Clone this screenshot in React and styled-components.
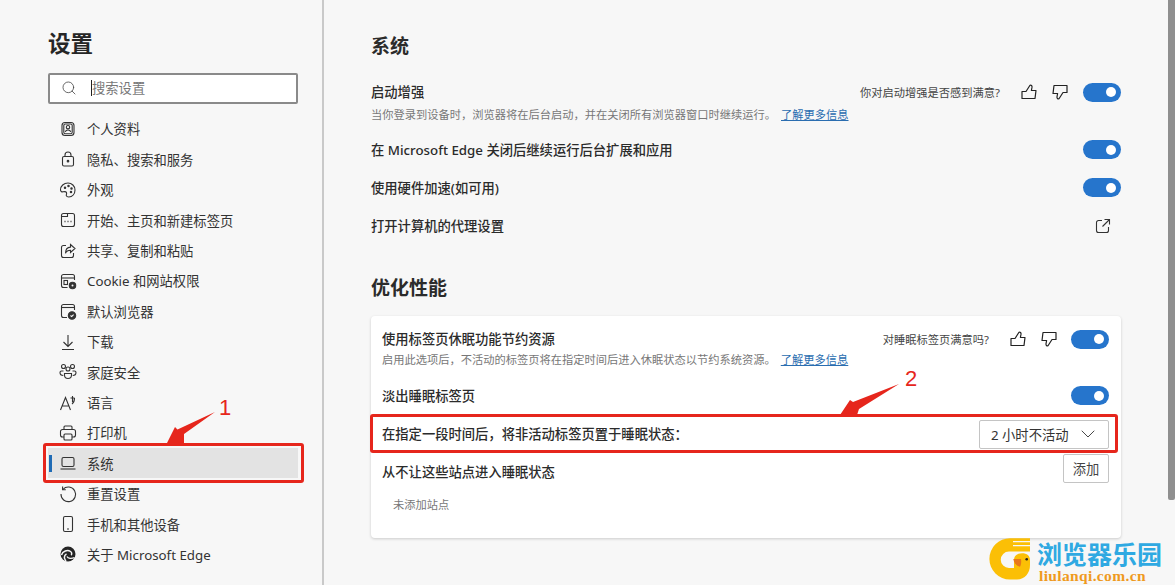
import React from "react";
import styled, { createGlobalStyle } from "styled-components";
import { Search, ChevronDown } from "lucide-react";

const GlobalStyle = createGlobalStyle`
  html, body { margin: 0; padding: 0; }
  body {
    background: #f7f7f7;
    font-family: "Noto Sans", "Noto Sans CJK SC", sans-serif;
    color: #2b2b2b;
  }
  * { box-sizing: border-box; }
`;

const Page = styled.div`
  position: relative;
  display: flex;
  width: 1175px;
  height: 585px;
  overflow: hidden;
  background: #f7f7f7;
`;

const Sidebar = styled.aside`
  flex: 0 0 324px;
  padding: 28px 24px 0 48px;
  border-right: 2px solid #c9c9c9;
`;

const SideTitle = styled.h1`
  margin: 0 0 13px;
  font-size: 22.5px;
  line-height: 32px;
  font-weight: 700;
  color: #262626;
`;

const SearchBox = styled.div`
  display: flex;
  align-items: center;
  width: 250px;
  height: 31px;
  padding: 0 0 2px 11px;
  background: #fff;
  border: 2px solid #8a8a8a;
  border-radius: 2px;
  color: #444;
`;

const Caret = styled.span`
  width: 1px;
  height: 16px;
  margin-left: 14px;
  background: #222;
`;

const Placeholder = styled.span`
  font-size: 13.3px;
  color: #777;
`;

const NavList = styled.nav`
  margin-top: 9.8px;
`;

const NavRow = styled.div`
  position: relative;
  display: flex;
  align-items: center;
  height: 30.4px;
  padding-left: 10px;
  font-size: 13.3px;
  color: #333;
  background: ${(p) => (p.$active ? "#e3e3e3" : "transparent")};
  &::before {
    content: "";
    display: ${(p) => (p.$active ? "block" : "none")};
    position: absolute;
    left: 1px;
    top: 7px;
    width: 3px;
    height: 17px;
    background: #1f6bb5;
  }
`;

const NavIcon = styled.svg`
  flex: 0 0 20px;
  width: 20px;
  height: 20px;
  margin-right: 9px;
  fill: none;
  stroke: #333;
  stroke-width: 1.1;
`;

const Main = styled.main`
  flex: 1;
  padding: 34px 47px 0 47px;
`;

const SectionTitle = styled.h2`
  margin: ${(p) => (p.$spaced ? "31.5px" : "0")} 0 0;
  font-size: 19px;
  line-height: 24px;
  font-weight: 700;
  color: #2b2b2b;
`;

const RowGroup = styled.div`
  margin-top: 24px;
`;

const Row = styled.div`
  display: flex;
  align-items: center;
  justify-content: space-between;
  height: ${(p) => p.$h || 38}px;
`;

const RowBlock = styled.div`
  height: ${(p) => p.$h}px;
`;

const RowTitle = styled.div`
  font-size: 13.3px;
  line-height: 20px;
  font-weight: 500;
  color: #2b2b2b;
`;

const TopRow = styled.div`
  display: flex;
  align-items: center;
  justify-content: space-between;
  height: 20px;
`;

const Sub = styled.div`
  margin-top: ${(p) => p.$top}px;
  font-size: 11.25px;
  line-height: 20px;
  color: #777;
`;

const Link = styled.a`
  margin-left: 5px;
  color: #2a6db0;
  text-decoration: underline;
`;

const Actions = styled.div`
  display: flex;
  align-items: center;
`;

const Feedback = styled.span`
  margin-right: 21px;
  font-size: 11.25px;
  color: #444;
`;

const ThumbIcon = styled.svg`
  width: 16px;
  height: 16px;
  margin-right: ${(p) => p.$gap}px;
  fill: none;
  stroke: #222;
  stroke-width: 1.2;
  stroke-linejoin: round;
  transform: ${(p) => (p.$down ? "rotate(180deg)" : "none")};
`;

const Toggle = styled.div`
  display: flex;
  align-items: center;
  justify-content: flex-end;
  width: 38px;
  height: 19px;
  padding-right: 5px;
  border-radius: 10px;
  background: #2675cc;
  &::after {
    content: "";
    width: 10px;
    height: 10px;
    border-radius: 50%;
    background: #fff;
  }
`;

const OpenIcon = styled.svg`
  width: 16px;
  height: 16px;
  margin-right: 10px;
  fill: none;
  stroke: #333;
  stroke-width: 1.1;
`;

const Card = styled.section`
  height: 222px;
  margin-top: 16px;
  padding: 13px 12px 0 11px;
  background: #fff;
  border-radius: 4px;
  box-shadow: 0 1px 3px rgba(0, 0, 0, 0.18);
`;

const Select = styled.div`
  display: flex;
  align-items: center;
  justify-content: space-between;
  width: 130px;
  height: 29px;
  padding: 0 8px 0 11px;
  background: #fff;
  border: 1px solid #c4c4c4;
  border-radius: 2px;
  font-size: 13.3px;
  color: #333;
`;

const NeverRow = styled.div`
  display: flex;
  justify-content: space-between;
  padding-top: 0.5px;
`;

const NeverTitle = styled(RowTitle)`
  padding-top: 7.5px;
`;

const AddButton = styled.button`
  width: 46px;
  height: 29px;
  padding: 0;
  background: #fff;
  border: 1px solid #c4c4c4;
  border-radius: 2px;
  font: inherit;
  font-size: 13.3px;
  color: #444;
`;

const EmptyNote = styled.div`
  margin: 12px 0 0 11px;
  font-size: 11.25px;
  line-height: 20px;
  color: #777;
`;

const Scrollbar = styled.div`
  flex: 0 0 7px;
  height: 500px;
  background: #8f8f8f;
  border-radius: 0 0 2px 2px;
`;

/* annotations drawn over the screenshot */
const Mark = styled.div`
  position: absolute;
  left: ${(p) => p.$x}px;
  top: ${(p) => p.$y}px;
  width: ${(p) => p.$w}px;
  height: ${(p) => p.$h}px;
  border: 3px solid #e6261c;
  border-radius: 3px;
`;

const Overlay = styled.svg`
  position: absolute;
  left: 0;
  top: 0;
  width: 1175px;
  height: 585px;
  pointer-events: none;
`;

const MarkNumber = styled.span`
  position: absolute;
  left: ${(p) => p.$x}px;
  top: ${(p) => p.$y}px;
  font-family: "Liberation Sans", sans-serif;
  font-size: 22px;
  line-height: 24px;
  color: #e6261c;
`;

const Watermark = styled.div`
  position: absolute;
  left: 989px;
  top: 538px;
  display: flex;
  gap: 4px;
`;

const DuckLogo = styled.svg`
  width: 44px;
  height: 47px;
`;

const WatermarkText = styled.div`
  display: flex;
  flex-direction: column;
`;

const WatermarkName = styled.span`
  font-family: "Noto Sans CJK SC", sans-serif;
  font-size: 25px;
  line-height: 30px;
  font-weight: 700;
  color: #2fa9e2;
  white-space: nowrap;
`;

const WatermarkUrl = styled.span`
  margin: 0 0 0 2px;
  font-family: "Liberation Serif", serif;
  font-size: 15.5px;
  line-height: 15px;
  font-weight: 700;
  letter-spacing: 0.35px;
  color: #ef9a1e;
`;

const icons = {
  profile: (
    <>
      <rect x="4" y="3.5" width="12" height="13" rx="3" />
      <rect x="5.8" y="5" width="8.4" height="9.8" rx="1.5" />
      <circle cx="10" cy="8.2" r="1.7" />
      <path d="M7.3 13c.3-1.5 1.3-2 2.7-2s2.4.5 2.7 2" />
    </>
  ),
  lock: (
    <>
      <rect x="4.5" y="7.5" width="11" height="9.5" rx="1.5" />
      <path d="M7 7.500V6a3 3 0 0 1 6 0v1.500" />
      <circle cx="10" cy="12.200" r="0.800" fill="#333" />
    </>
  ),
  palette: (
    <>
      <path d="M10 3c-4.200 0-7.500 3-7.500 6.800 0 1.500 1.200 2.200 2.500 2 1.500-.3 3-.3 3.500.8.500 1.200-.5 2-.2 3 .3 1 1.300 1.400 2.500 1.400 3.600 0 6.200-3 6.200-7S13.800 3 10 3z" />
      <circle cx="7" cy="7.800" r="0.700" fill="#333" />
      <circle cx="10.500" cy="6" r="0.700" fill="#333" />
      <circle cx="13.500" cy="8.500" r="0.700" fill="#333" />
      <circle cx="13" cy="12" r="0.700" fill="#333" />
    </>
  ),
  newtab: (
    <>
      <rect x="3.5" y="3.5" width="13" height="13" rx="2" />
      <path d="M3.500 6.500h6V3.500" />
      <path d="M6.500 11.500h1M9.500 11.500h1M12.500 11.500h1" strokeWidth="1.300" />
    </>
  ),
  share: (
    <>
      <path d="M8 4.500H5.500a2 2 0 0 0-2 2v8a2 2 0 0 0 2 2h8a2 2 0 0 0 2-2V12" />
      <path d="M12.500 3.500L17 7.500l-4.500 4V9.300c-2.500 0-4.200 1-5 3 0-3.800 2-6 5-6.200z" />
    </>
  ),
  cookie: (
    <>
      <path d="M9.500 16.500H5.500a2 2 0 0 1-2-2v-9a2 2 0 0 1 2-2h9a2 2 0 0 1 2 2V9" />
      <path d="M3.500 7h13" />
      <rect x="6" y="9.5" width="3.5" height="4" />
      <circle cx="14.5" cy="14.5" r="3.2" fill="#333" />
      <circle cx="14.5" cy="14.5" r="1" fill="#f7f7f7" stroke="none" />
    </>
  ),
  browser: (
    <>
      <path d="M9 16.500H5.500a2 2 0 0 1-2-2v-9a2 2 0 0 1 2-2h9a2 2 0 0 1 2 2V9" />
      <path d="M3.500 6.500h13" />
      <circle cx="14" cy="14.5" r="3.7" fill="#333" />
      <path d="M12.500 14.500l1.200 1.100 1.900-2" stroke="#fff" />
    </>
  ),
  download: <path d="M10 3v11.500M5.500 10l4.500 4.500 4.500-4.500M4 17.500h12" />,
  family: (
    <>
      <circle cx="5.5" cy="4.5" r="2" />
      <circle cx="14.5" cy="4.5" r="2" />
      <circle cx="10" cy="7" r="2" />
      <path d="M6.500 11.500h7v1.500a3.500 3.500 0 0 1-7 0z" />
      <path d="M5.500 9H3.500A1.500 1.500 0 0 0 2 10.500c0 1.700 1.300 3 3.300 3M14.500 9h2a1.500 1.500 0 0 1 1.500 1.500c0 1.700-1.300 3-3.300 3" />
    </>
  ),
  language: (
    <>
      <path d="M2.500 17L7.500 4.500 12.500 17M4.200 13h6.600" />
      <path d="M14.500 3v6M12.500 5h4M16.500 5c0 3-1 5-2.500 6" />
    </>
  ),
  printer: (
    <>
      <path d="M6 6V4a1 1 0 0 1 1-1h6a1 1 0 0 1 1 1v2" />
      <path d="M6 14H4.500a2 2 0 0 1-2-2V8.500a2 2 0 0 1 2-2h11a2 2 0 0 1 2 2V12a2 2 0 0 1-2 2H14" />
      <rect x="6" y="11" width="8" height="6" rx="1" />
    </>
  ),
  laptop: (
    <>
      <rect x="4" y="4.5" width="12" height="9" rx="1.5" />
      <path d="M2.500 16h15" />
    </>
  ),
  reset: (
    <>
      <path d="M5 5.300A7.300 7.300 0 1 1 3 10" />
      <path d="M4.600 2.500v3.200h3.200" />
    </>
  ),
  phone: (
    <>
      <rect x="5.5" y="2.5" width="9" height="15" rx="1.5" />
      <path d="M9 15h2" />
    </>
  ),
  edge: (
    <>
      <circle cx="10" cy="10" r="7.5" fill="#262626" stroke="none" />
      <path d="M3.500 11c1-4 6-5.500 9-3.500 1.500 1 1.500 3 .5 3.500" stroke="#f7f7f7" strokeWidth="1.500" />
      <path d="M8 17c-2-2-2.500-5.500.5-7" stroke="#f7f7f7" strokeWidth="1.500" />
      <path d="M9 12.500c1 2 4.500 2.500 7.500 1" stroke="#f7f7f7" strokeWidth="1.300" />
    </>
  ),
};

const navItems = [
  ["profile", "个人资料"],
  ["lock", "隐私、搜索和服务"],
  ["palette", "外观"],
  ["newtab", "开始、主页和新建标签页"],
  ["share", "共享、复制和粘贴"],
  ["cookie", "Cookie 和网站权限"],
  ["browser", "默认浏览器"],
  ["download", "下载"],
  ["family", "家庭安全"],
  ["language", "语言"],
  ["printer", "打印机"],
  ["laptop", "系统", true],
  ["reset", "重置设置"],
  ["phone", "手机和其他设备"],
  ["edge", "关于 Microsoft Edge"],
];

const thumbPath = "M1 7.500H5L9 1.200C10.200 .8 11.200 1.800 11 3.200L10.400 6.500H15L14 14.500H1Z";

const Rating = ({ text, gap }) => (
  <>
    <Feedback>{text}</Feedback>
    <ThumbIcon viewBox="0 0 16 16" $gap={15}>
      <path d={thumbPath} />
    </ThumbIcon>
    <ThumbIcon viewBox="0 0 16 16" $gap={gap} $down>
      <path d={thumbPath} />
    </ThumbIcon>
  </>
);

const App = () => {
  return (
    <Page>
      <GlobalStyle />
      <Sidebar>
        <SideTitle>设置</SideTitle>
        <SearchBox>
          <Search size={16} strokeWidth={1.2} />
          <Caret />
          <Placeholder>搜索设置</Placeholder>
        </SearchBox>
        <NavList>
          {navItems.map(([icon, label, active]) => (
            <NavRow key={label} $active={active}>
              <NavIcon viewBox="0 0 20 20">{icons[icon]}</NavIcon>
              {label}
            </NavRow>
          ))}
        </NavList>
      </Sidebar>

      <Main>
        <SectionTitle>系统</SectionTitle>
        <RowGroup>
          <RowBlock $h={48.5}>
            <TopRow>
              <RowTitle>启动增强</RowTitle>
              <Actions>
                <Rating text="你对启动增强是否感到满意?" gap={15} />
                <Toggle />
              </Actions>
            </TopRow>
            <Sub $top={3}>
              当你登录到设备时，浏览器将在后台启动，并在关闭所有浏览器窗口时继续运行。
              <Link>了解更多信息</Link>
            </Sub>
          </RowBlock>
          <Row>
            <RowTitle>在 Microsoft Edge 关闭后继续运行后台扩展和应用</RowTitle>
            <Toggle />
          </Row>
          <Row>
            <RowTitle>使用硬件加速(如可用)</RowTitle>
            <Toggle />
          </Row>
          <Row>
            <RowTitle>打开计算机的代理设置</RowTitle>
            <OpenIcon viewBox="0 0 16 16">
              <path d="M7 2.500H3.500a2 2 0 0 0-2 2v8a2 2 0 0 0 2 2h8a2 2 0 0 0 2-2V9" />
              <path d="M9.500 1.500h5v5M14.500 1.500L7.500 8.500" />
            </OpenIcon>
          </Row>
        </RowGroup>

        <SectionTitle $spaced>优化性能</SectionTitle>
        <Card>
          <RowBlock $h={47.5}>
            <TopRow>
              <RowTitle>使用标签页休眠功能节约资源</RowTitle>
              <Actions>
                <Rating text="对睡眠标签页满意吗?" gap={14} />
                <Toggle />
              </Actions>
            </TopRow>
            <Sub $top={1}>
              启用此选项后，不活动的标签页将在指定时间后进入休眠状态以节约系统资源。
              <Link>了解更多信息</Link>
            </Sub>
          </RowBlock>
          <Row>
            <RowTitle>淡出睡眠标签页</RowTitle>
            <Toggle />
          </Row>
          <Row $h={39}>
            <RowTitle>在指定一段时间后，将非活动标签页置于睡眠状态：</RowTitle>
            <Select>
              2 小时不活动
              <ChevronDown size={24} strokeWidth={0.9} />
            </Select>
          </Row>
          <NeverRow>
            <NeverTitle>从不让这些站点进入睡眠状态</NeverTitle>
            <AddButton>添加</AddButton>
          </NeverRow>
          <EmptyNote>未添加站点</EmptyNote>
        </Card>
      </Main>
      <Scrollbar />

      <Mark $x={43} $y={443} $w={261} $h={40} />
      <Mark $x={370} $y={414} $w={748} $h={39} />
      <Overlay viewBox="0 0 1175 585">
        <path d="M167 443L175 427L177.500 429.500L215 412L184 434L184 443Z" fill="#e6261c" />
        <path d="M840 415L850 400L853 402L899 384L859 409L857 415Z" fill="#e6261c" />
      </Overlay>
      <MarkNumber $x={219} $y={396}>1</MarkNumber>
      <MarkNumber $x={905} $y={367}>2</MarkNumber>

      <Watermark>
        <DuckLogo viewBox="0 0 44 47">
          <path
            d="M41 .3H21A20.600 20.600 0 0 0 21 41.500H28C36 41.500 41 35 41 27V22C41 18 38 15.300 33 15.300C28 15.300 25 18 25 22V30H20A8.250 8.250 0 0 1 20 13.500H41Z"
            fill="#fbbf06"
          />
          <path d="M24 3.700H41M24 7.700H41" stroke="#f7f7f7" strokeWidth="1.300" />
          <path d="M24.300 21H32C32.500 24 32 27 31 28.700C27.500 28 25 25 24.300 21Z" fill="#e8771a" />
          <circle cx="37.700" cy="21.300" r="1.300" fill="#222" />
        </DuckLogo>
        <WatermarkText>
          <WatermarkName>浏览器乐园</WatermarkName>
          <WatermarkUrl>liulanqi.com.cn</WatermarkUrl>
        </WatermarkText>
      </Watermark>
    </Page>
  );
};

export default App;
